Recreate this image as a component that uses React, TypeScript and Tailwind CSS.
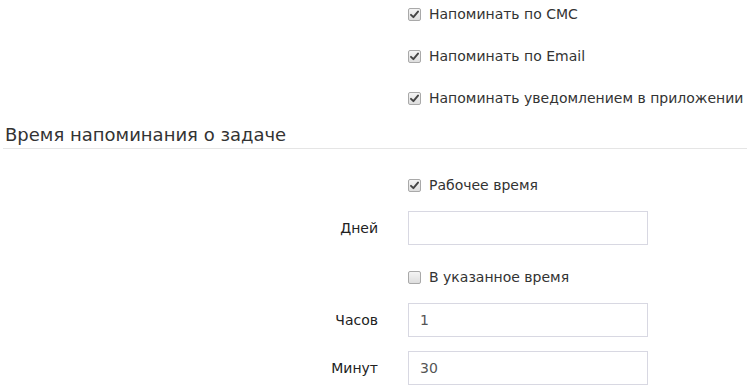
import React, { useState } from 'react';

const font = { fontFamily: '"DejaVu Sans", "Open Sans", sans-serif' };

const CheckBox: React.FC<{ checked: boolean; onChange: () => void }> = ({ checked, onChange }) => (
  <span
    onClick={onChange}
    className="w-[13px] h-[13px] shrink-0 rounded-[2px] border border-[#a9a9a9] bg-gradient-to-b from-[#f4f4f4] to-[#dedede] flex items-center justify-center cursor-pointer"
  >
    {checked && (
      <svg width="9" height="9" viewBox="0 0 9 9">
        <path d="M1 4.8 L3.4 7.2 L8 1.6" fill="none" stroke="#444" strokeWidth="1.9" strokeLinecap="round" strokeLinejoin="round" />
      </svg>
    )}
  </span>
);

const CheckRow: React.FC<{ label: string; checked: boolean; onChange: () => void; className?: string }> = ({ label, checked, onChange, className }) => (
  <div className={`flex h-[28px] items-center pl-[408px] ${className || ''}`}>
    <label className="flex items-center gap-[8px] text-[14px] text-[#333] cursor-pointer">
      <CheckBox checked={checked} onChange={onChange} />
      <span onClick={onChange}>{label}</span>
    </label>
  </div>
);

const FieldRow: React.FC<{ label: string; value: string; onChange: (v: string) => void; className?: string }> = ({ label, value, onChange, className }) => (
  <div className={`flex items-center h-[34px] ${className || ''}`}>
    <div className="w-[378px] text-right text-[14px] font-medium text-[#222]">{label}</div>
    <input
      value={value}
      onChange={(e) => onChange(e.target.value)}
      className="ml-[30px] w-[240px] h-[34px] border border-[#d8d8e2] px-[11px] text-[14px] text-[#555] outline-none"
      style={font}
    />
  </div>
);

const App: React.FC = () => {
  const [sms, setSms] = useState(true);
  const [email, setEmail] = useState(true);
  const [push, setPush] = useState(true);
  const [workTime, setWorkTime] = useState(true);
  const [exactTime, setExactTime] = useState(false);
  const [days, setDays] = useState('');
  const [hours, setHours] = useState('1');
  const [minutes, setMinutes] = useState('30');

  return (
    <div className="w-[747px] h-[390px] bg-white overflow-hidden" style={font}>
      <CheckRow label="Напоминать по СМС" checked={sms} onChange={() => setSms(!sms)} />
      <CheckRow label="Напоминать по Email" checked={email} onChange={() => setEmail(!email)} className="mt-[14px]" />
      <CheckRow label="Напоминать уведомлением в приложении" checked={push} onChange={() => setPush(!push)} className="mt-[14px]" />

      <div className="mt-[11px] ml-[3px] pl-[2px] pb-[1px] border-b border-[#e5e5e5] text-[18px] leading-[24px] text-[#333]">
        Время напоминания о задаче
      </div>

      <CheckRow label="Рабочее время" checked={workTime} onChange={() => setWorkTime(!workTime)} className="mt-[22px]" />
      <FieldRow label="Дней" value={days} onChange={setDays} className="mt-[12px]" />
      <CheckRow label="В указанное время" checked={exactTime} onChange={() => setExactTime(!exactTime)} className="mt-[18px]" />
      <FieldRow label="Часов" value={hours} onChange={setHours} className="mt-[12px]" />
      <FieldRow label="Минут" value={minutes} onChange={setMinutes} className="mt-[14px]" />
    </div>
  );
};

export default App;
